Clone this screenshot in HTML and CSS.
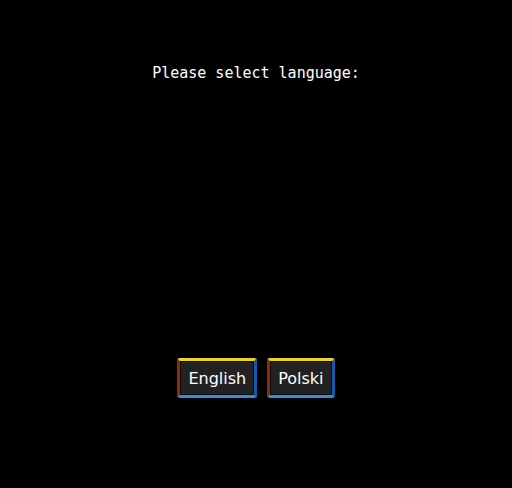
FILE: index.html
```html
<!DOCTYPE html>
<html lang="en">
  <head>
    <meta charset="UTF-8" />
    <meta name="viewport" content="width=device-width, initial-scale=1.0" />
    <title>Language</title>
    <link rel="stylesheet" href="styles.css">
  </head>
  <body>
    <div id="screen">
      <p class="prompt">Please select language:</p>

      <div class="langs">
        <button type="button" class="lang">English</button>
        <button type="button" class="lang">Polski</button>
      </div>
    </div>
  </body>
</html>
```

FILE: styles.css
```css
* {
  padding: 0;
  margin: 0;
  box-sizing: border-box;
}
body {
  background: #000;
}
#screen {
  width: 512px;
  height: 488px;
  display: flex;
  flex-direction: column;
  align-items: center;
  padding-top: 63px;
}

.prompt {
  color: #fff;
  font-family: "DejaVu Sans Mono", monospace;
  font-size: 15px;
  line-height: 20px;
}

.langs {
  margin-top: 275px;
  display: flex;
  gap: 10px;
}
.lang {
  height: 40px;
  padding: 0 8px 0 8px;
  background: #222;
  color: #fff;
  font-family: "DejaVu Sans", sans-serif;
  font-size: 16px;
  border-top: 3px solid #f2d21a;
  border-left: 3px solid #8a2c12;
  border-right: 3px solid #1458a8;
  border-bottom: 3px solid #2f8ee0;
  border-radius: 3px;
  box-shadow: inset 0 0 0 1px #0c0c0c;
}
```
